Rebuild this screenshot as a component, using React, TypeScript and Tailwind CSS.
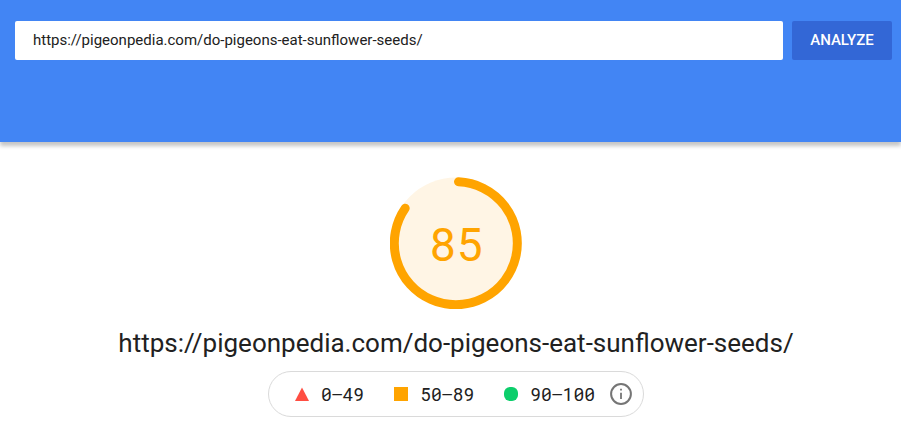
import { useState } from "react";

const PAGE_URL = "https://pigeonpedia.com/do-pigeons-eat-sunflower-seeds/";

function SearchHeader() {
  const [url, setUrl] = useState(PAGE_URL);
  return (
    <header className="h-[142px] bg-[#4285f4] pt-[21px] pr-[9px] pl-[15px] shadow-[0_4px_4px_rgba(0,0,0,0.23)]">
      <form className="flex gap-[9px]" onSubmit={(e) => e.preventDefault()}>
        <input
          type="text"
          aria-label="Web page URL"
          value={url}
          onChange={(e) => setUrl(e.target.value)}
          className="h-[39px] min-w-0 flex-1 rounded-xs bg-white px-[18px] pb-0.5 text-[15px] text-[#212121] outline-none"
        />
        <button
          type="submit"
          className="h-[39px] w-[100px] rounded-xs bg-[#3367d6] text-[15px] font-medium text-white"
        >
          ANALYZE
        </button>
      </form>
    </header>
  );
}

function ScoreGauge({ score }: { score: number }) {
  return (
    <div className="grid size-[132px] place-items-center text-[#ffa400]">
      <svg viewBox="0 0 132 132" className="col-start-1 row-start-1 size-full" aria-hidden="true">
        <circle cx="66" cy="66" r="65.5" fill="#fff5e5" />
        <path
          d="M68.5 4.8 A61.5 61.5 0 1 1 15.2 31.3"
          fill="none"
          stroke="currentColor"
          strokeWidth="9"
          strokeLinecap="round"
        />
      </svg>
      <span className="col-start-1 row-start-1 font-['Roboto_Mono','Roboto',monospace] text-[46px] leading-none">
        {score}
      </span>
    </div>
  );
}

function Legend() {
  return (
    <div className="flex h-[46px] items-center rounded-full border border-[#dadada] pr-[11px] pl-[26px] font-['Roboto_Mono','Inter',monospace] text-[18px] text-[#212121] tabular-nums slashed-zero">
      <svg viewBox="0 0 14 14" className="mr-3 size-[14px]" aria-hidden="true">
        <path d="M7 0.5 L14 14 H0 Z" fill="#ff4e42" />
      </svg>
      <span>0–49</span>
      <span className="mr-3 ml-[30px] size-[14px] bg-[#ffa400]" />
      <span>50–89</span>
      <span className="mr-3 ml-[30px] size-[14px] rounded-md bg-[#0cce6b]" />
      <span>90–100</span>
      <button type="button" aria-label="About the score scale" className="ml-[15px]">
        <svg viewBox="0 0 22 22" className="size-[22px]" fill="none" stroke="#757575" aria-hidden="true">
          <circle cx="11" cy="11" r="9.9" strokeWidth="2" />
          <path d="M11 9.8 V16 M11 5.8 V7.6" strokeWidth="1.8" />
        </svg>
      </button>
    </div>
  );
}

export default function App() {
  return (
    <div className="min-h-screen bg-white font-['Roboto',sans-serif]">
      <SearchHeader />
      <main className="flex flex-col items-center pt-[35px] pl-[11px]">
        <ScoreGauge score={85} />
        <h1 className="mt-[18px] mb-3 text-[26px] leading-8 text-[#212121]">{PAGE_URL}</h1>
        <Legend />
      </main>
    </div>
  );
}
